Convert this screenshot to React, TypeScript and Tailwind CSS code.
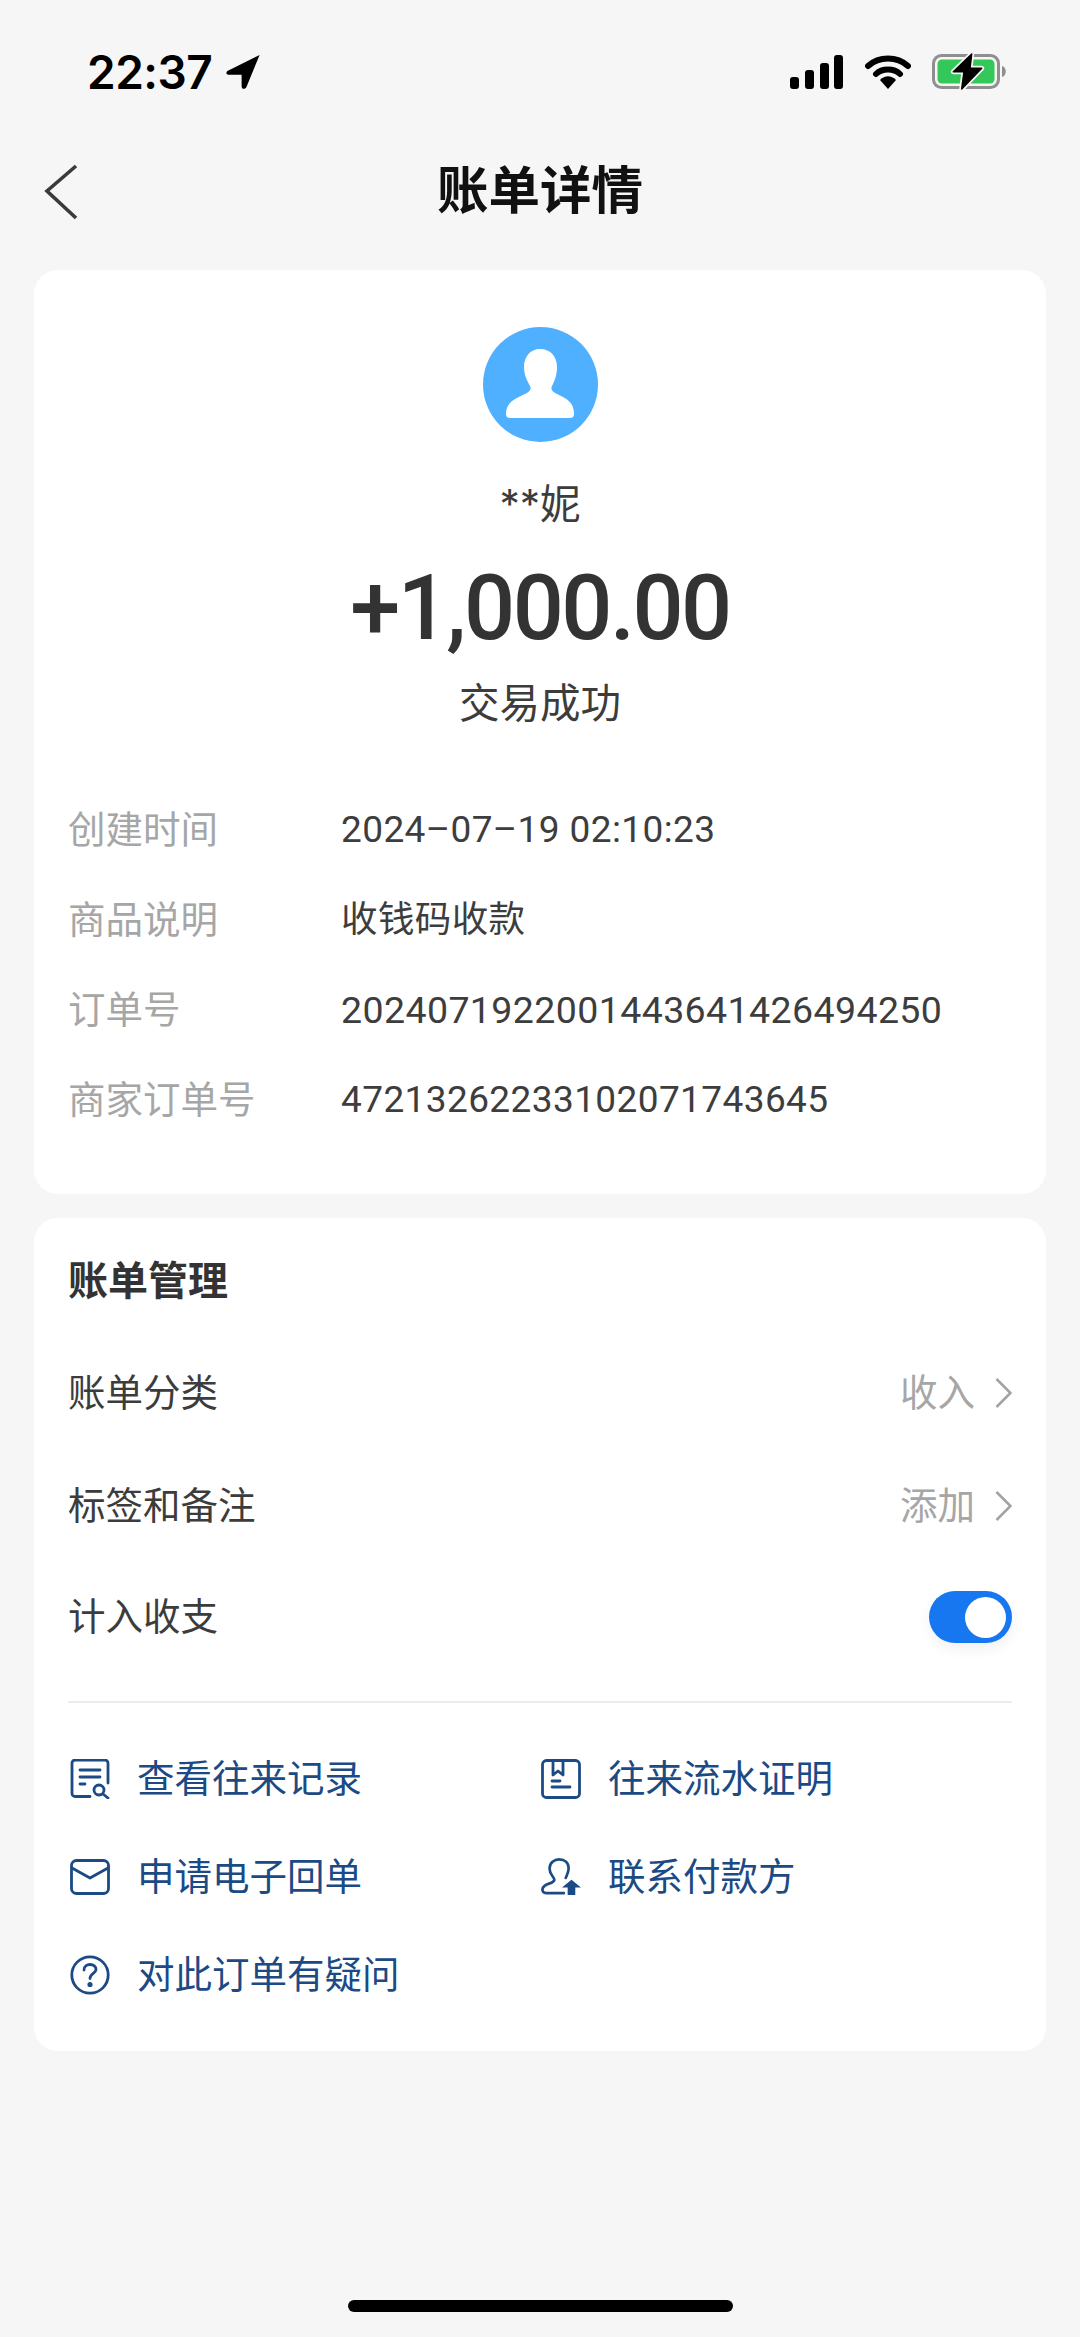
import React from "react";

const cjk = "font-['Inter','Noto_Sans_CJK_SC',sans-serif]";

function DetailRow({ label, value, size }: { label: string; value: string; size?: string }) {
  return (
    <div className="flex h-[90px] items-center">
      <span className="w-[273px] text-[37.5px] text-[#a6a6a6]">{label}</span>
      <span className={`${size ?? "text-[37.5px]"} text-[#3d3d3d] font-['Roboto','Noto_Sans_CJK_SC',sans-serif] tracking-[0.4px]`}>{value}</span>
    </div>
  );
}

function Chevron() {
  return (
    <svg width="17" height="32" viewBox="0 0 17 32" fill="none" className="ml-[20px]">
      <path d="M1.5 2 L15.5 16 L1.5 30" stroke="#a3a3a3" strokeWidth="2.6" />
    </svg>
  );
}

function IconRecords() {
  return (
    <svg width="40" height="40" viewBox="0 0 40 40" fill="none" stroke="#1b4a85" strokeWidth="2.8" strokeLinecap="round" strokeLinejoin="round">
      <path d="M20 37.5 H5 a3 3 0 0 1 -3 -3 V4 a3 3 0 0 1 3 -3 H35 a3 3 0 0 1 3 3 V24" />
      <path d="M10 11 H30 M10 18 H30 M10 25 H15" />
      <circle cx="29" cy="31" r="5" />
      <path d="M33 35 L38 39" />
    </svg>
  );
}
function IconStatement() {
  return (
    <svg width="40" height="40" viewBox="0 0 40 40" fill="none" stroke="#1b4a85" strokeWidth="2.8" strokeLinecap="round" strokeLinejoin="round">
      <rect x="1.5" y="1.5" width="37" height="37" rx="4" />
      <path d="M12 2 V16 L17 12 L22 16 V2" />
      <path d="M11 22 H19 M11 28 H29" />
    </svg>
  );
}
function IconMail() {
  return (
    <svg width="40" height="36" viewBox="0 0 40 36" fill="none" stroke="#1b4a85" strokeWidth="2.8" strokeLinecap="round" strokeLinejoin="round">
      <rect x="1.5" y="1.5" width="37" height="33" rx="5" />
      <path d="M2 9 L20 19 L38 9" />
    </svg>
  );
}
function IconContact() {
  return (
    <svg width="42" height="40" viewBox="0 0 42 40" fill="none">
      <path d="M24 37 H6 C1 37 0 32 4 29 C8 26 13 27 14 23 C14 20 9 18 9 11 C9 5 14 1.5 19 1.5 C25 1.5 29 5 29 11 C29 15 27 18 26 21" stroke="#1b4a85" strokeWidth="2.8" strokeLinecap="round" strokeLinejoin="round" />
      <path d="M32 23 L42 31 H36 V39 H28 V31 H22 Z" fill="#1b4a85" />
    </svg>
  );
}
function IconQuestion() {
  return (
    <svg width="40" height="40" viewBox="0 0 40 40" fill="none" stroke="#1b4a85" strokeWidth="2.8" strokeLinecap="round" strokeLinejoin="round">
      <circle cx="20" cy="20" r="18.2" />
      <path d="M14 15 C14 11 17 9.5 20 9.5 C23.5 9.5 26 11.5 26 14.5 C26 18.5 20 18.5 20 23.5" />
      <circle cx="20" cy="29.5" r="1.2" fill="#1b4a85" />
    </svg>
  );
}

function LinkItem({ icon, text }: { icon: React.ReactNode; text: string }) {
  return (
    <div className="flex h-[98px] items-center pl-[2px]">
      <div className="mr-[27px] flex w-[40px] items-center justify-center">{icon}</div>
      <span className="text-[37.5px] text-[#1b4a85]">{text}</span>
    </div>
  );
}

export default function App() {
  return (
    <div className={`flex h-[2337px] w-[1080px] flex-col overflow-hidden bg-[#f6f6f6] ${cjk}`}>
      {/* Status bar */}
      <div className="flex h-[144px] items-center justify-between pl-[87px] pr-[72px]">
        <div className="flex items-center">
          <span className="text-[46px] font-semibold text-black font-['Inter',sans-serif] tracking-[-0.5px]">22:37</span>
          <svg width="37" height="36" viewBox="0 0 36 38" className="ml-[13px]">
            <path d="M35 1 L1 18 C-1 20 0 22 3 22 L16 22 L16 34 C16 37 19 38 21 35 Z" fill="#000" />
          </svg>
        </div>
        <div className="flex items-center">
          <svg width="53" height="34" viewBox="0 0 53 34">
            <rect x="0" y="22" width="9" height="12" rx="3" fill="#000" />
            <rect x="15" y="15" width="9" height="19" rx="3" fill="#000" />
            <rect x="30" y="8" width="9" height="26" rx="3" fill="#000" />
            <rect x="44" y="0" width="9" height="34" rx="3" fill="#000" />
          </svg>
          <svg width="46" height="34" viewBox="0 0 46 34" className="ml-[22px]">
            <path d="M3 11 C14 1 32 1 43 11" fill="none" stroke="#000" strokeWidth="6" strokeLinecap="round" />
            <path d="M11 19 C17 13 29 13 35 19" fill="none" stroke="#000" strokeWidth="6" strokeLinecap="round" />
            <path d="M15 25 C20 20 26 20 31 25 L23 34 Z" fill="#000" />
          </svg>
          <svg width="76" height="38" viewBox="0 0 76 38" className="ml-[21px]">
            <rect x="1.5" y="2.5" width="65" height="32" rx="8" fill="none" stroke="#8f8f8f" strokeWidth="3" />
            <rect x="5.5" y="6.5" width="57" height="24" rx="4.5" fill="#34c759" />
            <path d="M70 13 C75 14 75 23 70 24 Z" fill="#8f8f8f" />
            <path d="M39.7 1 L21.3 18.7 H32 L29.7 36 L49.7 15.3 H38 Z" fill="#f6f6f6" stroke="#f6f6f6" strokeWidth="5" strokeLinejoin="round" />
            <path d="M39.7 1 L21.3 18.7 H32 L29.7 36 L49.7 15.3 H38 Z" fill="#000" stroke="#000" strokeWidth="1.5" strokeLinejoin="round" />
          </svg>
        </div>
      </div>

      {/* Nav bar */}
      <div className="relative flex h-[92px] items-center justify-center">
        <svg width="34" height="56" viewBox="0 0 34 56" className="absolute left-[44px] top-[20px]" fill="none">
          <path d="M32 2 L3 27 L32 54" stroke="#3a3a3a" strokeWidth="3.6" />
        </svg>
        <span className="pt-[2px] text-[51.5px] font-semibold text-[#111]">账单详情</span>
      </div>

      <div className="mt-[34px] flex flex-col gap-[24px] px-[34px]">
        {/* Summary card */}
        <div className="flex h-[924px] flex-col rounded-[24px] bg-white px-[34px]">
          <div className="mt-[57px] flex flex-col items-center">
            <svg width="115" height="115" viewBox="0 0 115 115">
              <circle cx="57.5" cy="57.5" r="57.5" fill="#4fb0ff" />
              <path d="M57 22 C68 22 74 30 74 40 C74 49 71 55 69 59 C67 63 70 65 74 67 C84 72 91 75 91 87 C91 90 89 91 87 91 H27 C25 91 23 90 23 87 C23 75 32 72 42 67 C46 65 49 63 47 59 C45 55 41 49 41 40 C41 30 47 22 57 22 Z" fill="#fff" />
            </svg>
            <span className="mt-[36px] text-[40.5px] leading-[54px] text-[#3c3c3c]">**妮</span>
            <span className="mt-[27px] text-[90px] font-medium leading-[100px] text-[#333] font-['Roboto',sans-serif] tracking-[-2.5px]">+1,000.00</span>
            <span className="mt-[18px] text-[40.5px] leading-[54px] text-[#3c3c3c]">交易成功</span>
          </div>
          <div className="mt-[54px] flex flex-col">
            <DetailRow label="创建时间" value="2024–07–19 02:10:23" size="text-[37px]" />
            <DetailRow label="商品说明" value="收钱码收款" size="text-[36.5px]" />
            <DetailRow label="订单号" value="2024071922001443641426494250" />
            <DetailRow label="商家订单号" value="47213262233102071743645" size="text-[37px]" />
          </div>
        </div>

        {/* Management card */}
        <div className="flex h-[833px] flex-col rounded-[24px] bg-white px-[34px]">
          <div className="mt-[37px] text-[40px] font-semibold leading-[52px] text-[#333]">账单管理</div>
          <div className="mt-[30px] flex h-[112px] items-center justify-between">
            <span className="text-[37.5px] text-[#3c3c3c]">账单分类</span>
            <div className="flex items-center">
              <span className="text-[37.5px] text-[#a6a6a6]">收入</span>
              <Chevron />
            </div>
          </div>
          <div className="flex h-[112px] items-center justify-between pt-[2px]">
            <span className="text-[37.5px] text-[#3c3c3c]">标签和备注</span>
            <div className="flex items-center">
              <span className="text-[37.5px] text-[#a6a6a6]">添加</span>
              <Chevron />
            </div>
          </div>
          <div className="flex h-[112px] items-center justify-between">
            <span className="text-[37.5px] text-[#3c3c3c]">计入收支</span>
            <div className="flex h-[52px] w-[83px] items-center justify-end rounded-full bg-[#1677f0] pr-[6px] shadow-[0_6px_14px_rgba(0,0,0,0.06)]">
              <div className="h-[41px] w-[41px] rounded-full bg-white" />
            </div>
          </div>
          <div className="mt-[28px] h-[2px] bg-[#ececec]" />
          <div className="mt-[27px] grid grid-cols-[471px_1fr]">
            <LinkItem icon={<IconRecords />} text="查看往来记录" />
            <LinkItem icon={<IconStatement />} text="往来流水证明" />
            <LinkItem icon={<IconMail />} text="申请电子回单" />
            <LinkItem icon={<IconContact />} text="联系付款方" />
            <LinkItem icon={<IconQuestion />} text="对此订单有疑问" />
          </div>
        </div>
      </div>

      {/* Home indicator */}
      <div className="mt-auto mb-[25px] flex justify-center">
        <div className="h-[12px] w-[385px] rounded-full bg-black" />
      </div>
    </div>
  );
}
